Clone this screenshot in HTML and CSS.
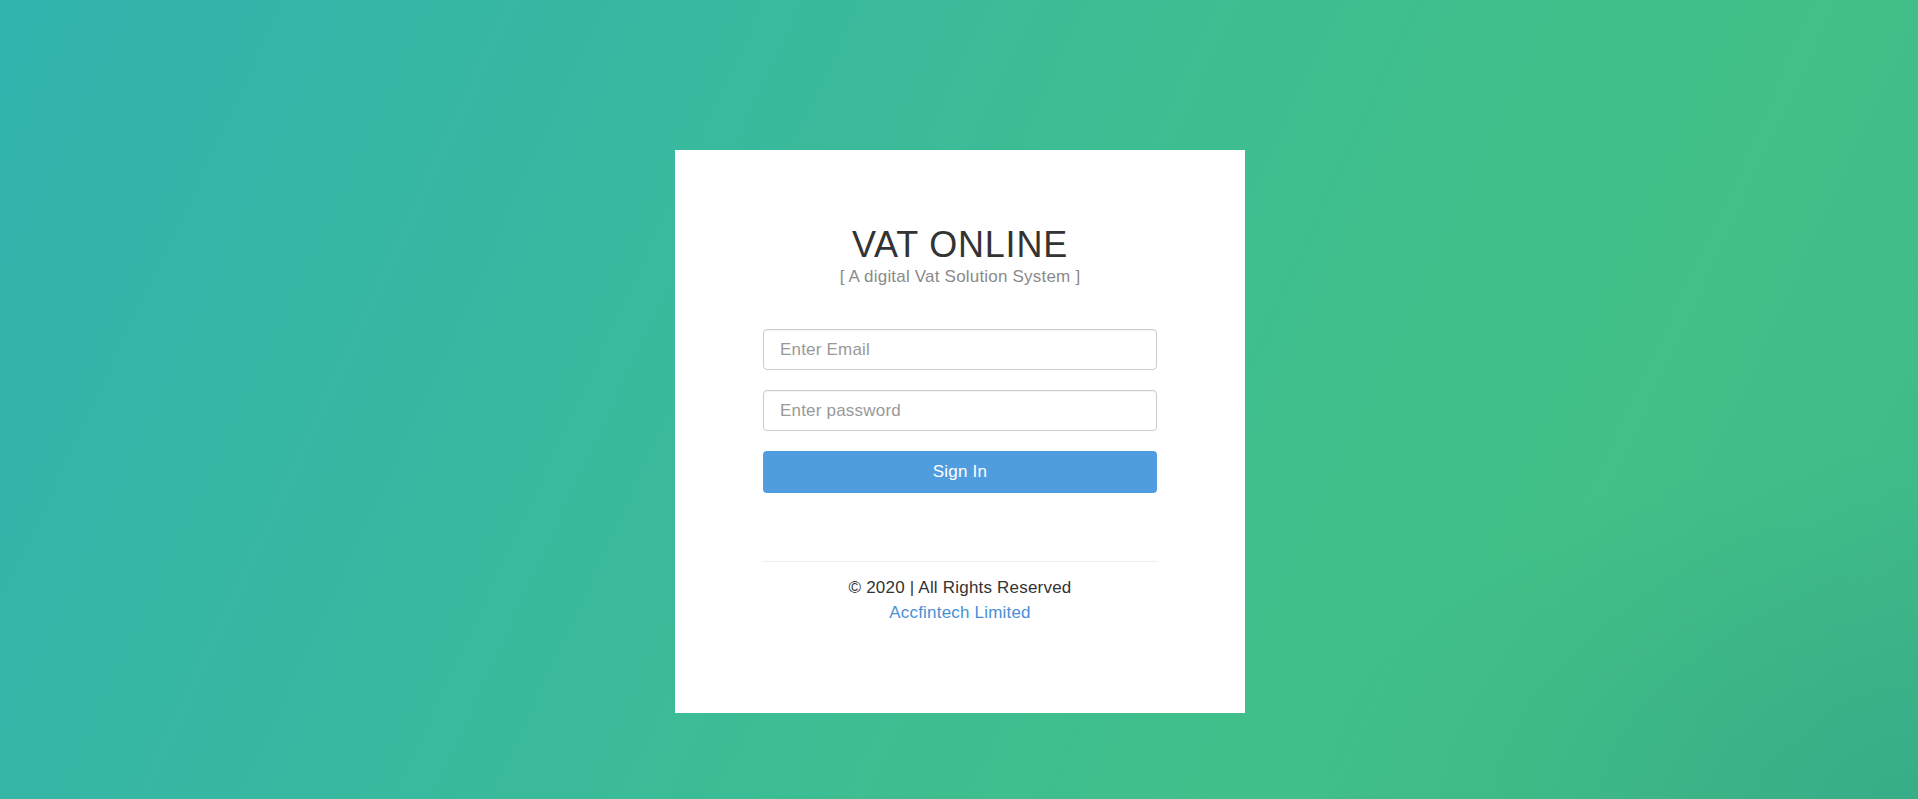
FILE: index.html
```html
<!DOCTYPE html>
<html lang="en">
<head>
<meta charset="utf-8">
<title>VAT ONLINE</title>
<link rel="stylesheet" href="styles.css">
</head>
<body>
<main class="page">
  <section class="card">
    <header class="brand">
      <h1 class="brand-title">VAT ONLINE</h1>
      <p class="brand-sub">[ A digital Vat Solution System ]</p>
    </header>
    <form class="login-form">
      <input class="field" type="email" placeholder="Enter Email">
      <input class="field" type="password" placeholder="Enter password">
      <button class="btn-signin" type="button">Sign In</button>
    </form>
    <footer class="card-footer">
      <p class="copy">© 2020 | All Rights Reserved</p>
      <a class="company" href="#">Accfintech Limited</a>
    </footer>
  </section>
</main>
</body>
</html>
```
FILE: styles.css
```css
html, body {
  margin: 0;
  padding: 0;
  height: 100%;
}
body {
  font-family: "Liberation Sans", Arial, sans-serif;
  font-size: 17px;
  letter-spacing: 0.2px;
  color: #333;
  background:
    radial-gradient(ellipse 900px 500px at 100% 100%, rgba(40,150,130,0.35), rgba(40,150,130,0) 70%),
    linear-gradient(115deg, #32b3ae 0%, #38b8a0 30%, #3ebe90 55%, #42c087 80%, #3fb98a 100%);
  overflow: hidden;
}
.page {
  height: 100%;
  box-sizing: border-box;
  padding: 150px 0 0 2px;
  display: flex;
  justify-content: center;
  align-items: flex-start;
}
.card {
  width: 570px;
  height: 563px;
  box-sizing: border-box;
  background: #fff;
  padding: 74px 88px 0;
  display: flex;
  flex-direction: column;
}
.brand {
  text-align: center;
}
.brand-title {
  margin: 0;
  font-size: 36px;
  line-height: 41px;
  font-weight: 400;
  letter-spacing: 0.8px;
  color: #333;
}
.brand-sub {
  margin: 0;
  font-size: 17px;
  line-height: 24px;
  color: #8a8a8a;
}
.login-form {
  margin-top: 40px;
  display: flex;
  flex-direction: column;
  gap: 20px;
}
.field {
  height: 41px;
  box-sizing: border-box;
  border: 1px solid #ccc;
  border-radius: 4px;
  padding: 0 16px;
  font-family: "Liberation Sans", Arial, sans-serif;
  font-size: 17px;
  letter-spacing: 0.2px;
  color: #555;
  box-shadow: inset 0 1px 1px rgba(0,0,0,0.05);
  outline: none;
}
.field::placeholder {
  color: #999;
}
.btn-signin {
  height: 42px;
  border: none;
  border-radius: 4px;
  background: #4f9ddf;
  color: #fff;
  font-family: "Liberation Sans", Arial, sans-serif;
  font-size: 17px;
  letter-spacing: 0.2px;
  cursor: pointer;
}
.card-footer {
  margin-top: 68px;
  border-top: 1px solid #eee;
  padding-top: 13px;
  text-align: center;
  line-height: 25px;
}
.copy {
  margin: 0;
  color: #333;
}
.company {
  color: #4a8fd6;
  text-decoration: none;
}
```
